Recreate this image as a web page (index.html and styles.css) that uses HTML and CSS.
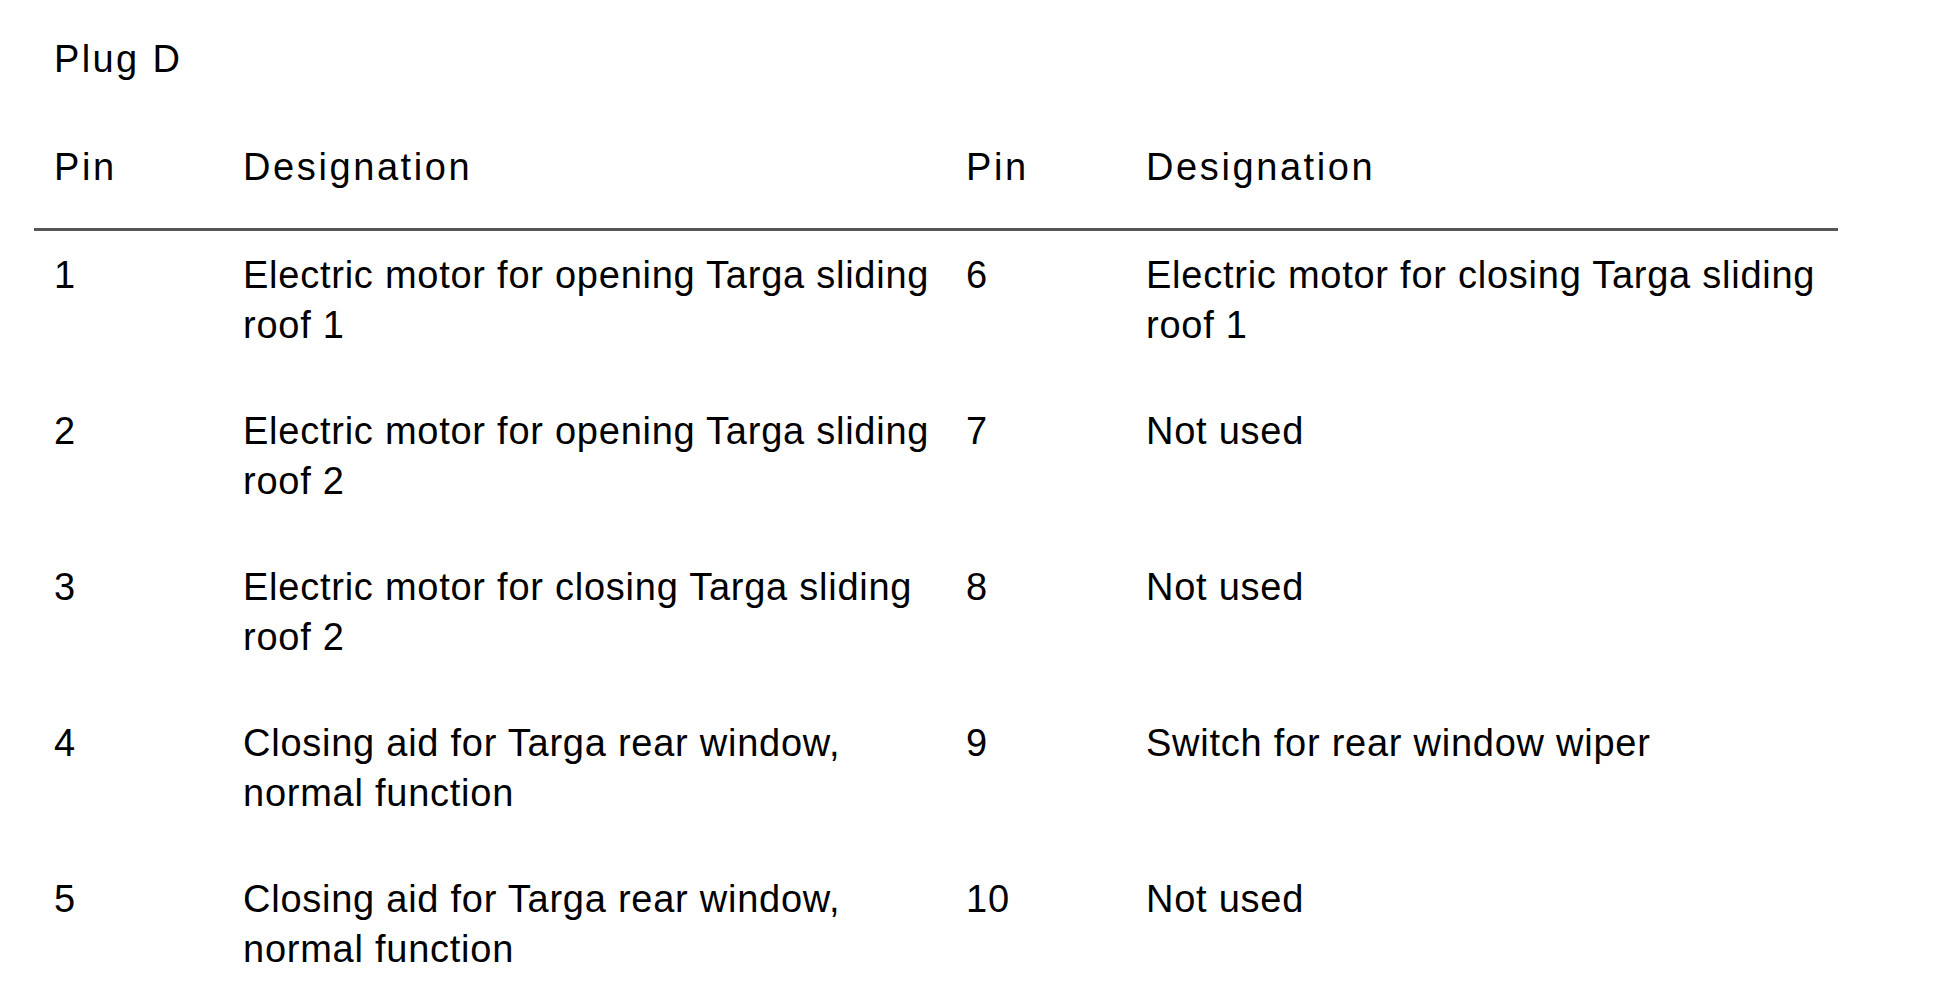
FILE: index.html
```html
<!DOCTYPE html>
<html lang="en">
<head>
<meta charset="utf-8">
<title>Plug D</title>
<link rel="stylesheet" href="styles.css">
</head>
<body>
<div class="page">
  <h1 class="title">Plug D</h1>
  <div class="table">
    <div class="row head">
      <div class="cell c1">Pin</div>
      <div class="cell c2">Designation</div>
      <div class="cell c3">Pin</div>
      <div class="cell c4">Designation</div>
    </div>
    <div class="row">
      <div class="cell c1">1</div>
      <div class="cell c2">Electric motor for opening Targa sliding roof 1</div>
      <div class="cell c3">6</div>
      <div class="cell c4">Electric motor for closing Targa sliding roof 1</div>
    </div>
    <div class="row">
      <div class="cell c1">2</div>
      <div class="cell c2">Electric motor for opening Targa sliding roof 2</div>
      <div class="cell c3">7</div>
      <div class="cell c4">Not used</div>
    </div>
    <div class="row">
      <div class="cell c1">3</div>
      <div class="cell c2">Electric motor for closing Targa sliding roof 2</div>
      <div class="cell c3">8</div>
      <div class="cell c4">Not used</div>
    </div>
    <div class="row">
      <div class="cell c1">4</div>
      <div class="cell c2">Closing aid for Targa rear window, normal function</div>
      <div class="cell c3">9</div>
      <div class="cell c4">Switch for rear window wiper</div>
    </div>
    <div class="row">
      <div class="cell c1">5</div>
      <div class="cell c2">Closing aid for Targa rear window, normal function</div>
      <div class="cell c3">10</div>
      <div class="cell c4">Not used</div>
    </div>
  </div>
</div>
</body>
</html>
```
FILE: styles.css
```css
html, body {
  margin: 0;
  padding: 0;
  background: #ffffff;
}

body {
  font-family: "Liberation Sans", Arial, sans-serif;
  color: #000000;
  font-size: 38px;
  line-height: 50px;
}

.page {
  padding-top: 34px;
}

.title {
  margin: 0 0 58px 54px;
  font-size: 38px;
  font-weight: normal;
  line-height: 50px;
  letter-spacing: 2.4px;
}

.table {
  margin-left: 34px;
  width: 1804px;
}

.row {
  display: grid;
  grid-template-columns: 209px 723px 180px 692px;
  padding: 19px 0 37px 0;
  letter-spacing: 0.75px;
}

.row.head {
  padding: 0 0 36px 0;
  border-bottom: 3px solid #565656;
  letter-spacing: 2.6px;
}

.cell {
  padding-right: 16px;
}

.c1 {
  padding-left: 20px;
}

.c4 {
  padding-right: 0;
}
```
